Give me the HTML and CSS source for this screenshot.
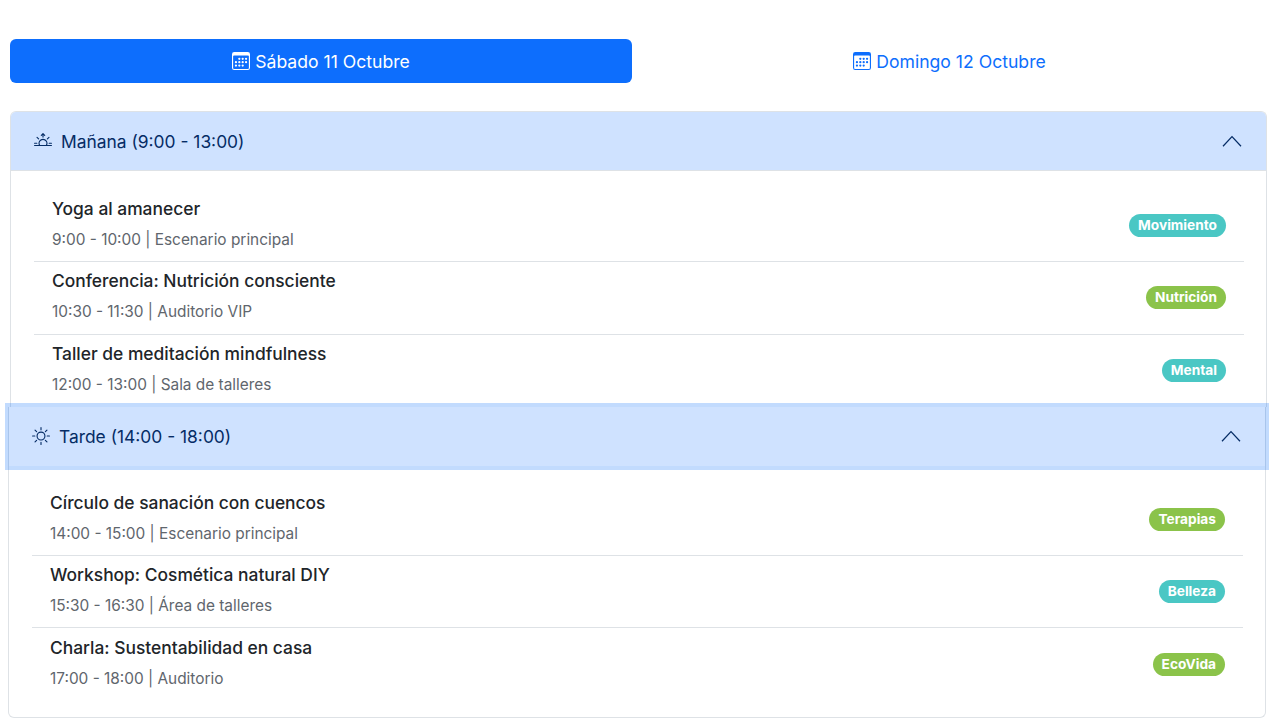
FILE: index.html
```html
<!DOCTYPE html>
<html lang="es">

<head>
    <meta charset="UTF-8">
    <meta name="viewport" content="width=device-width, initial-scale=1.0">
    <title>Programa</title>
    <link rel="stylesheet" href="styles.css">
</head>

<body>
    <svg class="sprite" width="0" height="0">
        <symbol id="icon-calendar" viewBox="0 0 16 16">
            <path d="M14 0H2a2 2 0 0 0-2 2v12a2 2 0 0 0 2 2h12a2 2 0 0 0 2-2V2a2 2 0 0 0-2-2M1 3.857C1 3.384 1.448 3 2 3h12c.552 0 1 .384 1 .857v10.286c0 .473-.448.857-1 .857H2c-.552 0-1-.384-1-.857z"/>
            <path d="M6.5 7a1 1 0 1 0 0-2 1 1 0 0 0 0 2m3 0a1 1 0 1 0 0-2 1 1 0 0 0 0 2m3 0a1 1 0 1 0 0-2 1 1 0 0 0 0 2m-9 3a1 1 0 1 0 0-2 1 1 0 0 0 0 2m3 0a1 1 0 1 0 0-2 1 1 0 0 0 0 2m3 0a1 1 0 1 0 0-2 1 1 0 0 0 0 2m3 0a1 1 0 1 0 0-2 1 1 0 0 0 0 2m-9 3a1 1 0 1 0 0-2 1 1 0 0 0 0 2m3 0a1 1 0 1 0 0-2 1 1 0 0 0 0 2m3 0a1 1 0 1 0 0-2 1 1 0 0 0 0 2"/>
        </symbol>
        <symbol id="icon-chevron" viewBox="0 0 20 12">
            <path d="M1 11.2 10 1.6l9 9.6" fill="none" stroke="currentColor" stroke-width="1.25"/>
        </symbol>
    </svg>

    <!-- Day tabs -->
    <nav class="tabs">
        <button class="tab active">
            <svg class="tab-icon"><use href="#icon-calendar"></use></svg>
            Sábado 11 Octubre
        </button>
        <button class="tab">
            <svg class="tab-icon"><use href="#icon-calendar"></use></svg>
            Domingo 12 Octubre
        </button>
    </nav>

    <main class="accordion">
        <!-- Morning -->
        <section class="block block-morning">
            <button class="block-header">
                <svg class="block-icon" viewBox="0 0 16 16" fill="currentColor"><path d="M7.646 1.146a.5.5 0 0 1 .708 0l1.5 1.5a.5.5 0 0 1-.708.708L8.5 2.707V4.5a.5.5 0 0 1-1 0V2.707l-.646.647a.5.5 0 1 1-.708-.708zM2.343 4.343a.5.5 0 0 1 .707 0l1.414 1.414a.5.5 0 0 1-.707.707L2.343 5.05a.5.5 0 0 1 0-.707m11.314 0a.5.5 0 0 1 0 .707l-1.414 1.414a.5.5 0 1 1-.707-.707l1.414-1.414a.5.5 0 0 1 .707 0M8 7a3 3 0 0 1 2.599 4.5H5.4A3 3 0 0 1 8 7m3.71 4.5a4 4 0 1 0-7.418 0H.499a.5.5 0 0 0 0 1h15a.5.5 0 0 0 0-1h-3.79zM0 10a.5.5 0 0 1 .5-.5h2a.5.5 0 0 1 0 1h-2A.5.5 0 0 1 0 10m13 0a.5.5 0 0 1 .5-.5h2a.5.5 0 0 1 0 1h-2a.5.5 0 0 1-.5-.5"/></svg>
                <span>Mañana (9:00 - 13:00)</span>
                <svg class="chevron"><use href="#icon-chevron"></use></svg>
            </button>
            <div class="block-body">
                <div class="item">
                    <div>
                        <h3>Yoga al amanecer</h3>
                        <p>9:00 - 10:00 | Escenario principal</p>
                    </div>
                    <span class="badge teal">Movimiento</span>
                </div>
                <div class="item">
                    <div>
                        <h3>Conferencia: Nutrición consciente</h3>
                        <p>10:30 - 11:30 | Auditorio VIP</p>
                    </div>
                    <span class="badge green">Nutrición</span>
                </div>
                <div class="item">
                    <div>
                        <h3>Taller de meditación mindfulness</h3>
                        <p>12:00 - 13:00 | Sala de talleres</p>
                    </div>
                    <span class="badge teal">Mental</span>
                </div>
            </div>
        </section>

        <!-- Afternoon -->
        <section class="block block-afternoon">
            <button class="block-header focused">
                <svg class="block-icon" viewBox="0 0 16 16" fill="currentColor"><path d="M8 11a3 3 0 1 1 0-6 3 3 0 0 1 0 6m0 1a4 4 0 1 0 0-8 4 4 0 0 0 0 8M8 0a.5.5 0 0 1 .5.5v2a.5.5 0 0 1-1 0v-2A.5.5 0 0 1 8 0m0 13a.5.5 0 0 1 .5.5v2a.5.5 0 0 1-1 0v-2A.5.5 0 0 1 8 13m8-5a.5.5 0 0 1-.5.5h-2a.5.5 0 0 1 0-1h2a.5.5 0 0 1 .5.5M3 8a.5.5 0 0 1-.5.5h-2a.5.5 0 0 1 0-1h2A.5.5 0 0 1 3 8m10.657-5.657a.5.5 0 0 1 0 .707l-1.414 1.415a.5.5 0 1 1-.707-.708l1.414-1.414a.5.5 0 0 1 .707 0m-9.193 9.193a.5.5 0 0 1 0 .707L3.05 13.657a.5.5 0 0 1-.707-.707l1.414-1.414a.5.5 0 0 1 .707 0m9.193 2.121a.5.5 0 0 1-.707 0l-1.414-1.414a.5.5 0 0 1 .707-.707l1.414 1.414a.5.5 0 0 1 0 .707M4.464 4.465a.5.5 0 0 1-.707 0L2.343 3.05a.5.5 0 1 1 .707-.707l1.414 1.414a.5.5 0 0 1 0 .708"/></svg>
                <span>Tarde (14:00 - 18:00)</span>
                <svg class="chevron"><use href="#icon-chevron"></use></svg>
            </button>
            <div class="block-body">
                <div class="item">
                    <div>
                        <h3>Círculo de sanación con cuencos</h3>
                        <p>14:00 - 15:00 | Escenario principal</p>
                    </div>
                    <span class="badge green">Terapias</span>
                </div>
                <div class="item">
                    <div>
                        <h3>Workshop: Cosmética natural DIY</h3>
                        <p>15:30 - 16:30 | Área de talleres</p>
                    </div>
                    <span class="badge teal">Belleza</span>
                </div>
                <div class="item">
                    <div>
                        <h3>Charla: Sustentabilidad en casa</h3>
                        <p>17:00 - 18:00 | Auditorio</p>
                    </div>
                    <span class="badge green">EcoVida</span>
                </div>
            </div>
        </section>
    </main>
</body>

</html>
```

FILE: styles.css
```css
/* General Reset */
* {
    margin: 0;
    padding: 0;
    box-sizing: border-box;
    font-family: 'Inter', 'Liberation Sans', sans-serif;
}

html,
body {
    height: 720px;
    overflow: hidden;
}

body {
    background-color: #fff;
    color: #212529;
    padding: 39px 13px 0 10px;
}

button {
    border: none;
    background: none;
    cursor: pointer;
}

.sprite {
    display: block;
}

/* Day tabs */
.tabs {
    display: flex;
    margin-bottom: 28px;
}

.tab {
    display: flex;
    align-items: center;
    justify-content: center;
    gap: 5px;
    width: 622px;
    height: 44px;
    border-radius: 6px;
    font-size: 17.6px;
    color: #0d6efd;
}

.tab + .tab {
    flex: 1;
}

.tab.active {
    background-color: #0d6efd;
    color: #fff;
}

.tab-icon {
    width: 18px;
    height: 18px;
    fill: currentColor;
}

/* Accordion */
.block {
    border: 1px solid #dee2e6;
}

.block-morning {
    border-bottom: none;
    border-radius: 6px 6px 0 0;
}

.block-afternoon {
    margin: 0 1px 0 -2px;
    border-top: none;
    border-radius: 0 0 6px 6px;
    height: 311px;
}

.block-header {
    display: flex;
    align-items: center;
    width: 100%;
    height: 58px;
    padding: 0 24px 0 23px;
    background-color: #cfe2ff;
    color: #052c65;
    font-size: 17.4px;
    border-radius: 5px 5px 0 0;
    box-shadow: 0 1px 0 #dee2e6;
}

.block-header.focused {
    position: relative;
    height: 59px;
    border-radius: 0;
    box-shadow: 0 0 0 4px rgba(13, 110, 253, 0.25);
}

.block-icon {
    width: 18px;
    height: 18px;
    margin-right: 9px;
    flex-shrink: 0;
}

.chevron {
    width: 20px;
    height: 12px;
    margin-left: auto;
    color: #052c65;
}

.block-morning .block-body {
    padding: 20px 22px 0 23px;
}

.block-afternoon .block-body {
    padding: 18px 22px 0 23px;
}

/* Items */
.item {
    display: flex;
    align-items: center;
    justify-content: space-between;
    height: 72.3px;
    padding: 0 18px 3px;
    border-bottom: 1px solid #dee2e6;
}

.item:last-child {
    border-bottom: none;
}

.item h3 {
    font-size: 17.4px;
    font-weight: 500;
    line-height: 26px;
    margin-bottom: 6px;
    color: #212529;
}

.item p {
    font-size: 15.4px;
    line-height: 24px;
    color: #5f666d;
}

.badge {
    padding: 3px 9px;
    margin-top: 2px;
    border-radius: 12px;
    font-size: 13.7px;
    font-weight: 700;
    line-height: 17px;
    color: #fff;
}

.teal {
    background-color: #4ac7c4;
}

.green {
    background-color: #8bc34a;
}
```
